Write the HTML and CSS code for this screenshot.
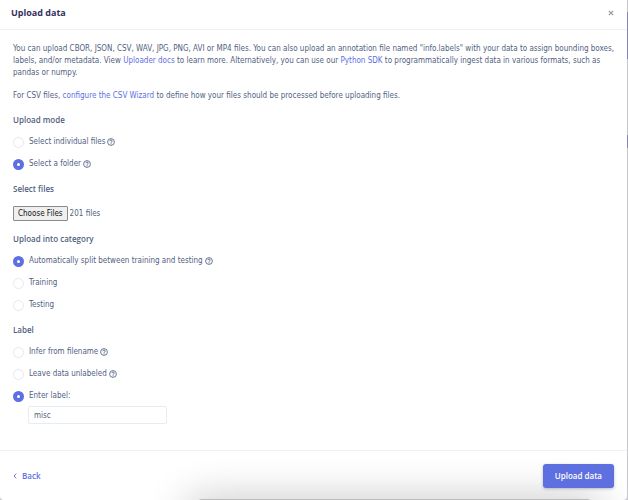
FILE: index.html
```html
<!DOCTYPE html>
<html lang="en">
    <head>
        <meta charset="UTF-8">
        <title>Upload data</title>
        <link rel="stylesheet" href="styles.css">
    </head>
    <body>
        <svg width="0" height="0" class="sprite" aria-hidden="true">
            <symbol id="help" viewBox="0 0 16 16">
                <circle cx="8" cy="8" r="6.8" fill="none" stroke="currentColor" stroke-width="1.7"/>
                <path d="M5.6 6.3C5.7 4.8 6.7 4.1 8 4.1s2.4.8 2.4 2.1c0 1.6-2.2 1.7-2.2 3.3" fill="none" stroke="currentColor" stroke-width="1.8"/>
                <circle cx="8.1" cy="11.7" r="1.1" fill="currentColor"/>
            </symbol>
        </svg>
        <form class="modal">
            <header class="modal-header">
                <h1>Upload data</h1>
                <button type="button" class="close" aria-label="Close">
                    <svg viewBox="0 0 6 6" width="6" height="6"><path d="M.8.8l4.4 4.4M5.2.8L.8 5.2" stroke="currentColor" stroke-width="1.2"/></svg>
                </button>
            </header>
            <main class="modal-body">
                <p>You can upload CBOR, JSON, CSV, WAV, JPG, PNG, AVI or MP4 files. You can also upload an annotation file named "info.labels" with your data to assign bounding boxes, labels, and/or metadata. View <a href="#docs">Uploader docs</a> to learn more. Alternatively, you can use our <a href="#sdk">Python SDK</a> to programmatically ingest data in various formats, such as pandas or numpy.</p>
                <p>For CSV files, <a href="#wizard">configure the CSV Wizard</a> to define how your files should be processed before uploading files.</p>
                <fieldset>
                    <legend>Upload mode</legend>
                    <div class="option">
                        <input id="mode-files" name="mode" type="radio"/>
                        <label for="mode-files">Select individual files</label>
                        <svg class="help"><use href="#help"/></svg>
                    </div>
                    <div class="option">
                        <input id="mode-folder" name="mode" type="radio" checked/>
                        <label for="mode-folder">Select a folder</label>
                        <svg class="help"><use href="#help"/></svg>
                    </div>
                </fieldset>
                <div class="files">
                    <label for="files">Select files</label>
                    <input id="files" type="file" multiple/>
                </div>
                <fieldset>
                    <legend>Upload into category</legend>
                    <div class="option">
                        <input id="category-split" name="category" type="radio" checked/>
                        <label for="category-split">Automatically split between training and testing</label>
                        <svg class="help"><use href="#help"/></svg>
                    </div>
                    <div class="option">
                        <input id="category-training" name="category" type="radio"/>
                        <label for="category-training">Training</label>
                    </div>
                    <div class="option">
                        <input id="category-testing" name="category" type="radio"/>
                        <label for="category-testing">Testing</label>
                    </div>
                </fieldset>
                <fieldset>
                    <legend>Label</legend>
                    <div class="option">
                        <input id="label-infer" name="label-mode" type="radio"/>
                        <label for="label-infer">Infer from filename</label>
                        <svg class="help"><use href="#help"/></svg>
                    </div>
                    <div class="option">
                        <input id="label-none" name="label-mode" type="radio"/>
                        <label for="label-none">Leave data unlabeled</label>
                        <svg class="help"><use href="#help"/></svg>
                    </div>
                    <div class="option">
                        <input id="label-enter" name="label-mode" type="radio" checked/>
                        <label for="label-enter">Enter label:</label>
                    </div>
                    <input class="label-text" type="text" value="misc" aria-label="Label text"/>
                </fieldset>
            </main>
            <footer class="modal-footer">
                <a class="back" href="#back">
                    <svg viewBox="0 0 4 6" width="4" height="6"><path d="M3.2.7L1 3l2.2 2.3" fill="none" stroke="currentColor"/></svg>
                    Back
                </a>
                <button type="submit" class="upload">Upload data</button>
            </footer>
            <div class="dock"></div>
        </form>
        <script>
            (() => {
                const transfer = new DataTransfer();
                for (let i = 1; i <= 201; i++) {
                    transfer.items.add(new File([], 'misc.' + i + '.jpg'));
                }
                document.getElementById('files').files = transfer.files;
            })();
        </script>
    </body>
</html>
```

FILE: styles.css
```css
* {
    box-sizing: border-box;
}
body {
    margin: 0;
    padding-right: 1px;
    font: 8px/12px "DejaVu Sans Condensed", "Open Sans", sans-serif;
    color: #525f7f;
    background: linear-gradient(#c8c8cc 12px, #8480bd 12px 59px, #c8c8cc 59px 135px, #8480bd 135px 148px, #c8c8cc 148px);
}
a {
    color: #5e6fe4;
    text-decoration: none;
}
p {
    margin: 0 0 11px;
}
fieldset {
    margin: 0;
    padding: 0;
    border: 0;
}
input,
button {
    font: inherit;
    color: inherit;
}
h1,
legend,
.files label,
.back,
.upload {
    font-family: "Open Sans", sans-serif;
    font-weight: 600;
}
.sprite {
    position: absolute;
}
.modal {
    position: relative;
    display: flex;
    flex-direction: column;
    min-height: 100vh;
    overflow: hidden;
    background: #fff;
    border-radius: 0 0 4px 4px;
}
.modal-header {
    display: flex;
    align-items: center;
    justify-content: space-between;
    height: 30px;
    padding: 0 13px 4px 11px;
    border-bottom: 1px solid #f0f1f4;
}
.modal-header h1 {
    margin: 0;
    font-size: 9px;
    font-weight: 700;
    color: #32325d;
}
.close {
    display: flex;
    padding: 0;
    border: 0;
    background: none;
    color: #999;
}
.modal-body {
    flex: 1;
    padding: 13px 11px 0 13px;
}
legend,
.files label {
    display: block;
    padding: 0;
    margin-bottom: 5px;
}
.option {
    display: flex;
    align-items: center;
    height: 22px;
}
.option input {
    appearance: none;
    width: 11px;
    height: 11px;
    margin: 1px 5px 0 0;
    border: 1px solid #e6e8ed;
    border-radius: 50%;
}
.option input:checked {
    border: 4px solid #5e6fe4;
}
.help {
    width: 8px;
    height: 8px;
    margin: 0 0 1px 2px;
}
p + fieldset {
    margin-top: 12px;
}
fieldset,
.files {
    margin-top: 8px;
}
.files input {
    display: block;
    margin: 11px 0 12px;
}
.files input::file-selector-button {
    height: 15px;
    margin: 0 2px 0 0;
    padding: 0 4px;
    border: 1px solid #8a8a8a;
    border-radius: 1px;
    font: inherit;
    color: #111;
    background: #efefef;
}
.label-text {
    display: block;
    width: 139px;
    height: 18px;
    margin: -1px 0 0 15px;
    padding: 0 5px;
    border: 1px solid #e3eef4;
    border-radius: 2px;
}
.modal-footer {
    display: flex;
    align-items: center;
    justify-content: space-between;
    height: 50px;
    padding: 0 13px;
    border-top: 1px solid #f0f1f4;
}
.back {
    display: flex;
    align-items: center;
    gap: 5px;
}
.upload {
    position: relative;
    z-index: 1;
    height: 24px;
    padding: 0 12px;
    border: 0;
    border-radius: 3px;
    color: #fff;
    background: #5e6fe0;
    box-shadow: 0 1px 3px rgba(50, 50, 93, .3);
}
/* top edge of the dock and its shadow */
.dock {
    position: absolute;
    bottom: -9px;
    left: 198px;
    right: 36px;
    height: 10px;
    border-radius: 4px;
    background: #bbb;
    box-shadow: 0 12px 40px 12px rgba(0, 0, 0, .24);
    pointer-events: none;
}
```
